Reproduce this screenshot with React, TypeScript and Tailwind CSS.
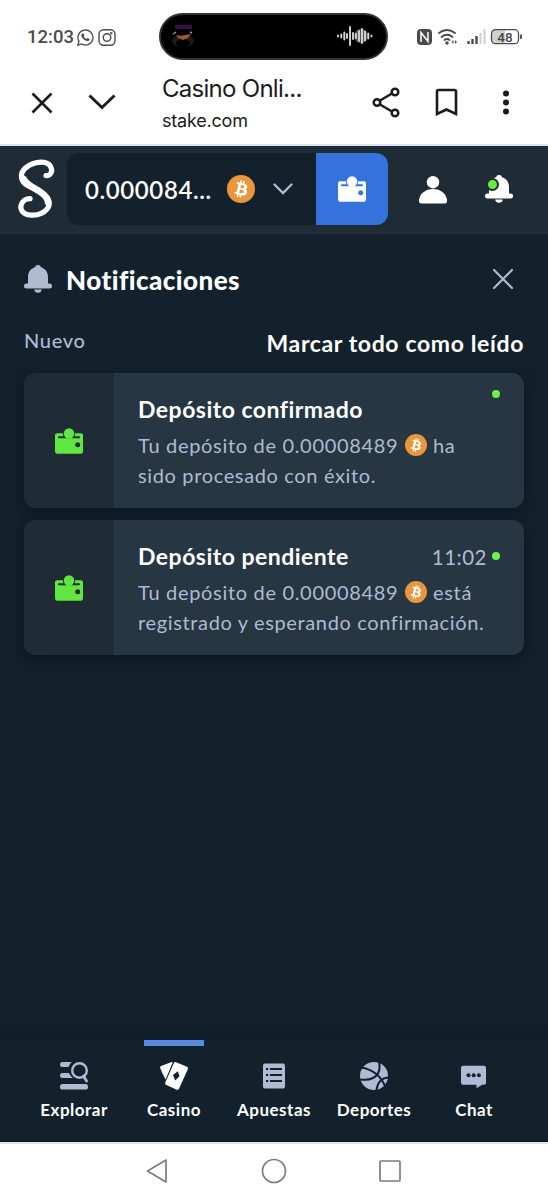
import React from "react";

const Wallet = ({ size = 28, hole }: { size?: number; hole: string }) => (
  <svg width={size} height={size} viewBox="0 0 28 28" className="shrink-0">
    <path fill="currentColor" d="M2 6.300h24a2 2 0 0 1 2 2v16.200a2.200 2.200 0 0 1-2.200 2.200H2.200A2.200 2.200 0 0 1 0 24.500V8.300a2 2 0 0 1 2-2z" />
    <path stroke={hole} strokeWidth="2.100" strokeLinecap="round" d="M4 10.200h20" />
    <path fill={hole} d="M8.700 9.800a6.100 6.100 0 1 1 10.600 0z" />
    <circle cx="14" cy="6.500" r="5.200" fill="currentColor" />
    <circle cx="22.700" cy="17.800" r="2.500" fill={hole} />
  </svg>
);

const Bitcoin = ({ size }: { size: number }) => (
  <svg width={size} height={size} viewBox="0 0 32 32" className="inline-block shrink-0">
    <circle cx="16" cy="16" r="16" fill="#ea963a" />
    <path fill="#fff" d="M23.189 14.020c.314-2.096-1.283-3.223-3.465-3.975l.708-2.840-1.728-.43-.69 2.765c-.454-.114-.92-.22-1.385-.326l.695-2.783L15.596 6l-.708 2.839c-.376-.086-.746-.17-1.104-.26l.002-.009-2.384-.595-.46 1.846s1.283.294 1.256.312c.7.175.826.638.805 1.006l-.806 3.235c.048.012.11.030.18.057l-.183-.045-1.130 4.532c-.086.212-.303.531-.793.410.018.025-1.256-.313-1.256-.313l-.858 1.978 2.250.561c.418.105.828.215 1.231.318l-.715 2.872 1.727.43.708-2.840c.472.127.930.245 1.378.357l-.706 2.828 1.728.43.715-2.866c2.948.558 5.164.333 6.097-2.333.752-2.146-.037-3.385-1.588-4.192 1.130-.260 1.980-1.003 2.207-2.538zm-3.950 5.538c-.533 2.147-4.148.986-5.320.695l.950-3.805c1.172.293 4.929.872 4.370 3.110zm.535-5.569c-.487 1.953-3.495.960-4.470.717l.860-3.450c.975.243 4.118.696 3.610 2.733z" />
  </svg>
);

const Bell = () => (
  <svg width="28" height="28" viewBox="0 0 28 28" className="shrink-0">
    <path fill="currentColor" d="M14 0a3 3 0 0 0-3 2.300C6.800 3.600 4 7.200 4 11.500v7.100H2.500a2.500 2.500 0 0 0 0 5h23a2.500 2.500 0 0 0 0-5H24v-7.100c0-4.300-2.800-7.900-7-9.200A3 3 0 0 0 14 0zM10.200 24.600h7.600a3.850 3.850 0 0 1-7.600 0z" />
  </svg>
);

function StatusBar() {
  return (
    <div className="flex h-[60px] items-center pt-3 text-[#4b4b4b]">
      <span className="mt-[2px] ml-[27px] w-[50px] whitespace-nowrap font-['Roboto'] text-[18.500px] leading-6 font-medium">12:03</span>
      <svg className="mt-[2px]" width="17" height="17" viewBox="0 0 17 17" fill="none" stroke="#4b4b4b" strokeWidth="1.300">
        <path d="M.8 16.200 2 12.300a7.500 7.500 0 1 1 2.700 2.700z" />
        <path fill="#4b4b4b" stroke="none" d="M5.700 4.500c.5-.2 1 0 1.200.6l.5 1.300-.7 1c.7 1.300 1.500 2 2.800 2.600l1-1 2 .9c.2 1.500-1 2.400-2.200 2.200-3-.3-6-3.500-6-6 0-.7.500-1.300 1.400-1.600z" />
      </svg>
      <svg className="mt-[2px] ml-[4px]" width="18" height="17" viewBox="0 0 18 17" fill="none" stroke="#4b4b4b" strokeWidth="1.400">
        <rect x="1" y=".8" width="16" height="15.400" rx="4.500" />
        <circle cx="9" cy="8.500" r="3.800" />
        <circle cx="13.300" cy="4.200" r=".5" />
      </svg>
      <div className="ml-[43px] flex h-[47px] w-[229px] items-center justify-between rounded-full border-2 border-[#333] bg-black pr-[12px] pl-[9px]">
        <svg width="26" height="26" viewBox="0 0 26 26">
          <path fill="#35104a" d="M5 2h17v4H5z" />
          <ellipse cx="13" cy="18" rx="11" ry="6" fill="#211c17" />
          <ellipse cx="13" cy="20" rx="7" ry="4" fill="#000" />
          <path fill="#a3552b" d="m6 12 5 1 4-1 6-1-3 4-5 2-5-2z" />
          <path stroke="#999" strokeWidth="1.500" d="m3 11 3-2M20 9l2 1" />
        </svg>
        <svg width="38" height="22" viewBox="0 0 38 22" stroke="#d5d5d5" strokeWidth="1.900" strokeLinecap="round">
          <circle cx="25" cy="11" r="7" fill="#555" stroke="none" />
          <path d="M2 10.500v1M5.300 9.500v3M8.300 7.500v7M11 9v4M17 8v6M20 9v4M23 6v10M29 6.500v9M32.300 8.500v5M35.500 10.500v1" />
          <path d="M14 2v18M26 4v14" />
        </svg>
      </div>
      <svg className="mt-[2px] ml-[28px]" width="106" height="18" viewBox="0 0 106 18">
        <rect x="1" y="1" width="15" height="16" rx="4" fill="#4b4b4b" />
        <path fill="none" stroke="#fff" strokeWidth="1.500" d="M5 14V4.500l7 9V4" />
        <g fill="none" stroke="#4b4b4b" strokeWidth="1.800" strokeLinecap="round">
          <path d="M23 5q8-6 16 0M25.500 9q5.500-4.500 11 0M28.500 12q2.500-2 5 0" />
        </g>
        <circle cx="31" cy="15" r="1.700" fill="#4b4b4b" />
        <path d="m35.500 14 2-2v4zM39 12l2 2-2 2z" fill="#4b4b4b" />
        <path d="M52.500 16v-3M56.500 16v-5M60.500 16V8" stroke="#4b4b4b" strokeWidth="2.400" />
        <path d="M64.500 16V5M68.500 16V1" stroke="#cfcfcf" strokeWidth="2" />
        <path d="M79 1.500h10v14H79a4 4 0 0 1-4-4v-6a4 4 0 0 1 4-4z" fill="#d0d0d0" />
        <rect x="75.500" y="1.700" width="27" height="14" rx="4" fill="none" stroke="#4b4b4b" strokeWidth="1.300" />
        <path d="M105 6.500v4.500" stroke="#4b4b4b" strokeWidth="1.800" />
        <text x="89" y="13.500" textAnchor="middle" className="font-['Roboto'] text-[13.500px] font-medium" fill="#444">48</text>
      </svg>
    </div>
  );
}

function BrowserBar() {
  return (
    <div className="flex h-[86px] items-start border-b-2 border-[#dbe5f0] text-[#1b1b1d]">
      <svg className="mt-[32px] ml-[31px]" width="22" height="22" viewBox="0 0 22 22" stroke="currentColor" strokeWidth="2.600"><path d="m1.500 1.500 19 19m0-19-19 19" /></svg>
      <svg className="mt-[33px] ml-[35px]" width="28" height="18" viewBox="0 0 28 18" fill="none" stroke="currentColor" strokeWidth="2.900"><path d="m1.500 2.500 12.500 12 12.500-12" /></svg>
      <div className="mt-[14px] ml-[46px] w-[211px] font-['Inter'] whitespace-nowrap">
        <div className="text-[24px] leading-[30px] tracking-[-0.720px]">Casino Onli...</div>
        <div className="mt-[5px] text-[18px] leading-6 tracking-[-0.200px]">stake.com</div>
      </div>
      <svg className="mt-[27px] -ml-[1px]" width="29" height="31" viewBox="0 0 29 31" fill="none" stroke="currentColor" strokeWidth="2.500">
        <path d="m8 13.500 12-7M8 17.500l12 7" /><circle cx="5" cy="15.500" r="3.300" /><circle cx="23" cy="5" r="3.300" /><circle cx="23" cy="26" r="3.300" />
      </svg>
      <svg className="mt-[28px] ml-[34px]" width="23" height="29" viewBox="0 0 23 29" fill="none" stroke="currentColor" strokeWidth="2.600"><path d="M2 26V3.500A1.500 1.500 0 0 1 3.500 2h16A1.500 1.500 0 0 1 21 3.500V26l-9.500-4.500z" /></svg>
      <svg className="mt-[29px] ml-[44px]" width="8" height="28" viewBox="0 0 8 28" fill="currentColor"><circle cx="4" cy="4.500" r="3" /><circle cx="4" cy="13.500" r="3" /><circle cx="4" cy="22.500" r="3" /></svg>
    </div>
  );
}

function Header() {
  return (
    <header className="flex h-[88px] items-start bg-[#1f2c36] pt-[7px]">
      <svg className="mt-[5px] ml-[17px]" width="39" height="61" viewBox="0 0 39 61" fill="none" stroke="#fff" strokeLinecap="round">
        <path strokeWidth="5.200" d="M29 17.500C33 18 36 14 34 9.500C32 4 25 3.500 19 4.800C10 6.800 3.500 13 4.500 19.500C5.500 27 14 28.500 22 33C29 37 33.500 41 32 47.500C30 54 21 58 13 57C6 56.500 3 51.500 4 47.500C5 43 9 40.700 13 40.700" />
        <path strokeWidth="6.800" d="M6.500 21C9.500 27 15 28.500 22 33C28 37 31 40 31 44" />
      </svg>
      <div className="ml-[11px] flex h-[72px] w-[249px] items-center rounded-l-xl bg-[#13212c]">
        <span className="ml-[18px] w-[142px] pt-[1px] text-[24px] tracking-[0.600px] font-semibold whitespace-nowrap text-white">0.000084...</span>
        <Bitcoin size={28} />
        <svg className="ml-[18px]" width="20" height="12" viewBox="0 0 20 12" fill="none" stroke="#b1bad3" strokeWidth="2.300" strokeLinecap="round"><path d="m1.500 1.500 8.500 8.500 8.500-8.500" /></svg>
      </div>
      <div className="flex h-[72px] w-[72px] items-center justify-center rounded-r-xl bg-[#3573dc] text-white"><Wallet hole="#3573dc" /></div>
      <svg className="mt-[23px] ml-[31px]" width="28" height="28" viewBox="0 0 28 28" fill="#fff"><circle cx="14" cy="6.200" r="6.200" /><path d="M0 25a13.500 11.500 0 0 1 28 0q0 2.500-2.500 2.500h-23Q0 27.500 0 25z" /></svg>
      <div className="relative mt-[22px] ml-[38px] text-white"><Bell /><span className="absolute top-[3px] left-[1px] h-[13px] w-[13px] rounded-full border-2 border-[#1f2c36] bg-[#62ee44]" /></div>
    </header>
  );
}

function Notification({ title, time, tail, second }: { title: string; time?: string; tail: string; second: string }) {
  return (
    <article className="relative flex h-[135px] overflow-hidden rounded-xl bg-[#263642] shadow-[0_4px_12px_#0b151dcc]">
      <div className="flex w-[90px] items-center justify-center bg-[#1f2c36] text-[#62e642]"><Wallet hole="#1f2c36" /></div>
      <div className="flex-1 pt-[20px] pl-6">
        <div className="flex h-[37px] items-start justify-between pr-[37px]">
          <h2 className="text-[23px] leading-[32px] font-bold tracking-[0.480px] text-white">{title}</h2>
          {time && <time className="pt-[1px] text-[20.500px] leading-[32px] tracking-[0.500px]">{time}</time>}
        </div>
        <p className="h-[30px] text-[20px] leading-[30px] tracking-[0.680px] whitespace-nowrap">Tu depósito de 0.00008489 <span className="inline-flex pl-px align-[-3px]"><Bitcoin size={22} /></span> {tail}</p>
        <p className="text-[20px] leading-[30px] tracking-[0.640px] whitespace-nowrap">{second}</p>
      </div>
      <span className={`absolute right-[24px] h-2 w-2 rounded-full bg-[#69f44b] ${time ? "top-[32px]" : "top-[17px]"}`} />
    </article>
  );
}

const tabs = [
  { label: "Explorar", icon: <g><path fill="currentColor" d="M2.500 0H12Q9 2 8.500 5h-6a2.500 2.500 0 0 1 0-5zM2.500 11H9q1 3 4 5H2.500a2.500 2.500 0 0 1 0-5z" /><rect y="22" width="28" height="5.500" rx="2.600" fill="currentColor" /><circle cx="19.500" cy="8.500" r="7.300" fill="none" stroke="currentColor" strokeWidth="2.400" /><path d="m23.500 14 3 5" stroke="currentColor" strokeWidth="2.800" strokeLinecap="round" /></g> },
  { label: "Casino", icon: <g fill="#fff"><path d="M1.200 4 11 .2q2-.5 1.400 1L5.600 17.500Q2 11 .1 5.700-.2 4.500 1.200 4z" /><path d="m16 .2 11 4.500q1.500.8.9 2.300L19 26.700q-.8 1.600-2.300 1L6 22.800q-1.300-.7-.7-2.200L13.800 1.200Q14.600-.2 16 .2z" /><path fill="#13212c" d="m13 13 4.800-3.800 1.700 5-4.300 4.300z" /></g> },
  { label: "Apuestas", icon: <g><rect x="3" y="1.500" width="22" height="25" rx="2" fill="currentColor" /><path stroke="#13212c" strokeWidth="2" d="M6 7h2.300M10 7h12M6 13h2.300M10 13h12M6 19h2.300M10 19h12" /></g> },
  { label: "Deportes", icon: <g><circle cx="14" cy="14" r="14" fill="currentColor" /><path fill="none" stroke="#13212c" strokeWidth="2" d="M1 5.500Q18 8 25 24M19 0q2.500 12-6 16-5 2.500-13 1.500M28 15.500q-10 1-11.500 12.500" /></g> },
  { label: "Chat", icon: <g><path fill="currentColor" d="M3 3.700h21a2 2 0 0 1 2 2v15a2 2 0 0 1-2 2h-2l-5.500 3.500v-3.500H3a2 2 0 0 1-2-2v-15a2 2 0 0 1 2-2z" /><circle cx="8.500" cy="13.200" r="2" fill="#13212c" /><circle cx="13.700" cy="13.200" r="2" fill="#13212c" /><circle cx="18.900" cy="13.200" r="2" fill="#13212c" /></g> },
];

export default function App() {
  return (
    <div className="flex h-[1200px] w-[548px] flex-col overflow-hidden bg-white font-['Lato',sans-serif]">
      <StatusBar />
      <BrowserBar />
      <Header />
      <main className="flex-1 bg-[#13212c] px-6 text-[#b1bad3]">
        <div className="flex h-[90px] items-center">
          <Bell />
          <h1 className="ml-[14px] flex-1 pt-[2px] text-[26px] font-black tracking-[0.460px] text-white">Notificaciones</h1>
          <svg className="mr-[11px]" width="20" height="20" viewBox="0 0 20 20" stroke="currentColor" strokeWidth="2.200" strokeLinecap="round"><path d="m1 1 18 18M19 1 1 19" /></svg>
        </div>
        <div className="flex h-[49px] justify-between whitespace-nowrap">
          <span className="text-[20px] leading-[32px] font-medium tracking-[0.700px]">Nuevo</span>
          <button className="h-[38px] text-[23px] leading-[38px] font-bold tracking-[0.630px] text-white">Marcar todo como leído</button>
        </div>
        <div className="flex flex-col gap-3">
          <Notification title="Depósito confirmado" tail="ha" second="sido procesado con éxito." />
          <Notification title="Depósito pendiente" time="11:02" tail="está" second="registrado y esperando confirmación." />
        </div>
      </main>
      <nav className="flex h-[102px] justify-center border-b-2 border-[#111a22] bg-[#13212c] text-[#b1bad3] shadow-[0_-4px_12px_#0b151d88]">
        {tabs.map(({ label, icon }) => (
          <div key={label} className="flex w-[100px] flex-col items-center">
            <div className={`h-[6px] w-[60px] ${label === "Casino" ? "bg-[#5889dc]" : ""}`} />
            <svg className="mt-[16px]" width="28" height="28" viewBox="0 0 28 28">{icon}</svg>
            <span className="mt-[8px] text-[17px] leading-[24px] font-bold tracking-[0.500px] text-white">{label}</span>
          </div>
        ))}
      </nav>
      <div className="flex h-[58px] border-t-2 border-[#e1e5e8] bg-white pt-[14px]">
        <svg className="ml-[146px]" width="22" height="26" viewBox="0 0 22 26" fill="none" stroke="#7c7c7c" strokeWidth="1.700"><path strokeLinejoin="round" d="M20 2v22L1.500 13z" /></svg>
        <svg className="ml-[93px]" width="26" height="26" viewBox="0 0 26 26" fill="none" stroke="#7c7c7c" strokeWidth="1.700"><circle cx="13" cy="13" r="11.500" /></svg>
        <svg className="ml-[91px]" width="24" height="26" viewBox="0 0 24 26" fill="none" stroke="#7c7c7c" strokeWidth="1.700"><rect x="2" y="3" width="20" height="20" rx="1" /></svg>
      </div>
    </div>
  );
}
